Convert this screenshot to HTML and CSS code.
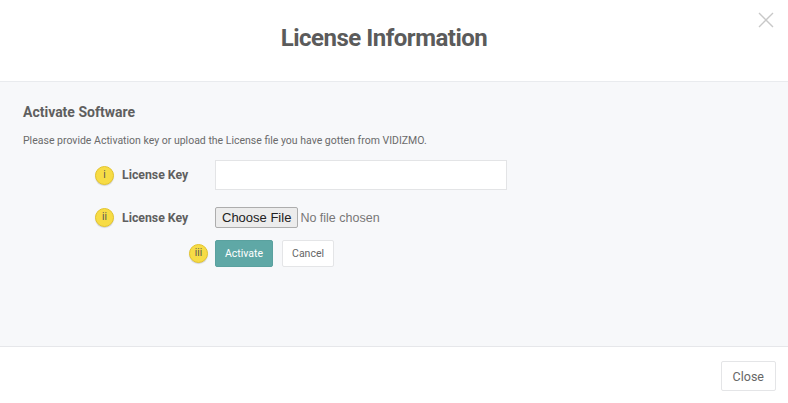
FILE: index.html
```html
<!DOCTYPE html>
<html lang="en">
<head>
    <meta charset="UTF-8">
    <title>License Information</title>
    <link rel="stylesheet" href="styles.css">
</head>
<body>
<div class="modal">
  <div class="modal-header">
    <h2>License Information</h2>
    <button type="button" class="close-x" aria-label="Close">
      <svg width="16" height="16" viewBox="0 0 16 16"><path d="M1 1 L15 15 M15 1 L1 15" stroke="#c8c8c8" stroke-width="1.4" fill="none"/></svg>
    </button>
  </div>

  <div class="modal-body">
    <h3>Activate Software</h3>
    <p class="hint">Please provide Activation key or upload the License file you have gotten from VIDIZMO.</p>

    <div class="form-row">
      <div class="label-cell">
        <span class="step">i</span>
        <label for="key">License Key</label>
      </div>
      <input type="text" id="key" class="key-input">
    </div>

    <div class="form-row file-row">
      <div class="label-cell">
        <span class="step">ii</span>
        <label for="file">License Key</label>
      </div>
      <input type="file" id="file" class="file-input">
    </div>

    <div class="form-row actions">
      <div class="label-cell">
        <span class="step">iii</span>
      </div>
      <button type="button" class="btn btn-primary">Activate</button>
      <button type="button" class="btn btn-default">Cancel</button>
    </div>
  </div>

  <div class="modal-footer">
    <button type="button" class="btn btn-default btn-close">Close</button>
  </div>
</div>
</body>
</html>
```

FILE: styles.css
```css
* {
  box-sizing: border-box;
}

body {
  margin: 0;
  background: #fff;
  font-family: Roboto, "Liberation Sans", sans-serif;
  color: #666;
}

.modal {
  width: 788px;
  height: 403px;
  display: flex;
  flex-direction: column;
}

.modal-header {
  position: relative;
  height: 82px;
  border-bottom: 1px solid #e9ebee;
  display: flex;
  align-items: center;
  justify-content: center;
  padding-right: 20px;
}

.modal-header h2 {
  margin: 0 0 6px;
  font-size: 24px;
  font-weight: 700;
  color: #5b5b5b;
  letter-spacing: -0.5px;
}

.close-x {
  position: absolute;
  top: 12px;
  right: 14px;
  padding: 0;
  border: 0;
  background: none;
}

.modal-body {
  height: 265px;
  background: #f7f8fa;
  border-bottom: 1px solid #e6e7ea;
  padding: 22px 23px 0;
}

.modal-body h3 {
  margin: 0;
  font-size: 14px;
  font-weight: 700;
  color: #5f5f5f;
}

.hint {
  margin: 14px 0 13px;
  font-size: 10.5px;
  color: #6a6a6a;
}

.form-row {
  display: flex;
  align-items: center;
  margin-bottom: 17px;
}

.label-cell {
  width: 192px;
  display: flex;
  align-items: center;
  justify-content: flex-end;
  padding-right: 27px;
}

.label-cell label {
  width: 66px;
  margin-left: 8px;
  white-space: nowrap;
  font-size: 12.3px;
  font-weight: 700;
  color: #5f5f5f;
}

.step {
  width: 19px;
  height: 19px;
  border-radius: 50%;
  background: #f7dc45;
  border: 1px solid #e4c52c;
  color: #555;
  font-size: 10px;
  line-height: 16px;
  text-align: center;
  box-shadow: 0 1px 1px rgba(0, 0, 0, 0.15);
}

.key-input {
  width: 292px;
  height: 30px;
  border: 1px solid #e3e4e6;
  background: #fff;
  outline: none;
}

.file-row {
  margin-bottom: 12px;
}

.file-input {
  font-family: "Liberation Sans", Arial, sans-serif;
  font-size: 12.5px;
  color: #777;
}

.file-input::file-selector-button {
  font-family: "Liberation Sans", Arial, sans-serif;
  font-size: 13px;
  color: #222;
  padding: 2px 6px;
  margin-right: 2px;
  border: 1px solid #adadad;
  border-radius: 2px;
  background: #ececec;
}

.actions .label-cell {
  padding-right: 7px;
}

.btn {
  height: 27px;
  padding: 0 9px;
  font-family: Roboto, "Liberation Sans", sans-serif;
  font-size: 10.5px;
  border-radius: 2px;
  cursor: pointer;
}

.btn-primary {
  background: #5fa8a6;
  border: 1px solid #5aa19f;
  color: #fff;
}

.btn-default {
  background: #fff;
  border: 1px solid #e4e5e7;
  color: #666;
  margin-left: 9px;
}

.modal-footer {
  flex: 1;
  display: flex;
  justify-content: flex-end;
  align-items: flex-start;
  padding: 14px 12px 0;
}

.btn-close {
  height: 30px;
  padding: 0 11px;
  font-size: 12.5px;
}
```
